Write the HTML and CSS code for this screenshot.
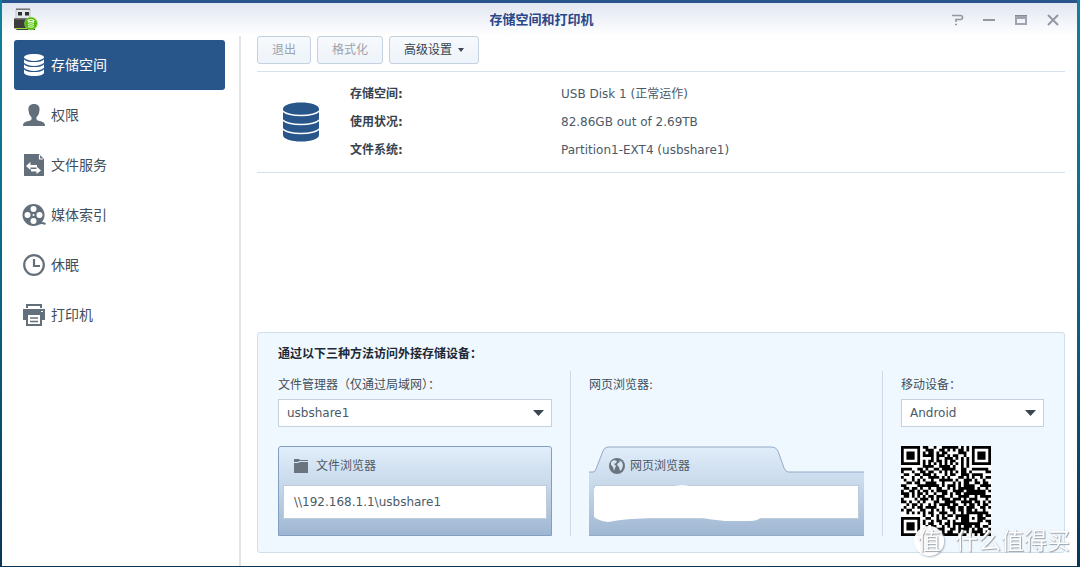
FILE: index.html
```html
<!DOCTYPE html>
<html lang="zh-CN">
<head>
<meta charset="utf-8">
<title>存储空间和打印机</title>
<link rel="stylesheet" href="styles.css">
</head>
<body>
<div class="window">
  <header class="titlebar">
    <svg class="app-icon" width="24" height="24" viewBox="0 0 24 24" aria-hidden="true">
      <path d="M2 1h14v10H2z" fill="#e4e7ea" stroke="#a5a9ae" stroke-width=".6"/>
      <path d="M2 .5h14v1.500H2z" fill="#777"/>
      <path d="M4 4h4v3.500H4zM11 4h4v3.500h-4z" fill="#2b2f33"/>
      <path d="M1 10h17l3 3v9H3l-3-2v-9z" fill="#3b3d3e"/>
      <path d="M1 10h17v1.500H1z" fill="#777"/>
      <path d="M1 20h12v1H1z" fill="#9adf32"/>
      <circle cx="17" cy="15.500" r="6.300" fill="#52b90b" stroke="#8edb4c" stroke-width=".8"/>
      <g fill="none" stroke="#e8ffd2" stroke-width="1.200"><ellipse cx="17" cy="12.500" rx="3" ry="1"/><path d="M14 14.500q3 1.500 6 0M14 16.500q3 1.500 6 0M14 18.500q3 1.500 6 0"/></g>
    </svg>
    <h1 class="title">存储空间和打印机</h1>
    <div class="controls">
      <button class="control" aria-label="帮助"><svg width="14" height="14" viewBox="0 0 14 14"><path d="M2 2.500h8.500q2 0 2 2t-2 2H6V9M5 11.500h2" fill="none" stroke="#9498a2" stroke-width="1.600"/></svg></button>
      <button class="control" aria-label="最小化"><svg width="14" height="14" viewBox="0 0 14 14"><path d="M1 7h12" stroke="#9498a2" stroke-width="2"/></svg></button>
      <button class="control" aria-label="最大化"><svg width="14" height="14" viewBox="0 0 14 14"><path d="M1 2h12v10H1zM3 6v4h8V6z" fill="#a0a4ae" fill-rule="evenodd"/><path d="M1 2h12v1H1z" fill="#858994"/></svg></button>
      <button class="control" aria-label="关闭"><svg width="14" height="14" viewBox="0 0 14 14"><path d="M2 2l10 10M12 2L2 12" stroke="#9498a2" stroke-width="2"/></svg></button>
    </div>
  </header>
  <div class="body">
    <nav class="sidebar">
      <a class="nav-item active" href="#storage"><svg width="24" height="24" viewBox="0 0 24 24" fill="currentColor"><path d="M2 4.500C2 2.500 6 1 12 1s10 1.500 10 3.500v15c0 2-4 3.500-10 3.500S2 21.500 2 19.500z"/><path d="M2 5.500q3 3 10 3t10-3M2 10.500q3 3 10 3t10-3M2 15.500q3 3 10 3t10-3" fill="none" stroke="#28568a" stroke-width="1.200"/></svg>存储空间</a>
      <a class="nav-item" href="#permission"><svg width="24" height="24" viewBox="0 0 24 24" fill="currentColor"><path d="M12 1c4 0 6 2.500 5.500 6l-.3 2c-.3 2-1.200 4-2.700 5v2c0 1.500 2 1.500 5 2.500 2.500.8 3.500 2 3.500 4.500H1c0-2.500 1-3.700 3.500-4.500 3-1 5-1 5-2.500v-2c-1.500-1-2.400-3-2.700-5l-.3-2C6 3.500 8 1 12 1z"/></svg>权限</a>
      <a class="nav-item" href="#service"><svg width="24" height="24" viewBox="0 0 24 24"><path d="M2 1h15l5 5v17H2z" fill="currentColor"/><path d="M17.500 2v4H21" fill="none" stroke="#fff" stroke-width="1.200"/><path d="M4 13l4.500-4v3H15v2.500H8.500V17zM19 17.500L14.500 21v-2.500H9V16h5.500v-2.500z" fill="#fff"/></svg>文件服务</a>
      <a class="nav-item" href="#media"><svg width="24" height="24" viewBox="0 0 24 24"><path d="M17 20.500q3-1 6.500.5" stroke="currentColor" stroke-width="2" fill="none"/><circle cx="11.500" cy="12" r="11" fill="currentColor"/><g fill="#fff"><circle cx="11.500" cy="6" r="3"/><circle cx="5.500" cy="12" r="3"/><circle cx="17.500" cy="12" r="3"/><circle cx="11.500" cy="18" r="3"/><circle cx="11.500" cy="12" r="1"/></g></svg>媒体索引</a>
      <a class="nav-item" href="#hibernation"><svg width="24" height="24" viewBox="0 0 24 24" fill="none" stroke="currentColor" stroke-width="2.200"><circle cx="12" cy="12" r="9.800"/><path d="M12 6v7h6"/></svg>休眠</a>
      <a class="nav-item" href="#printer"><svg width="24" height="24" viewBox="0 0 24 24"><path d="M5 5V2h14v3" fill="none" stroke="currentColor" stroke-width="2"/><path d="M1 6h22v11h-3v6H4v-6H1z" fill="currentColor"/><path d="M6 12h12v9H6z" fill="#fff"/><path d="M8 15h8M8 18.500h8" stroke="currentColor" stroke-width="1.500"/><path d="M19 8h2v1h-2z" fill="#fff"/></svg>打印机</a>
    </nav>
    <main class="main">
      <div class="toolbar">
        <button class="btn" disabled>退出</button>
        <button class="btn" disabled>格式化</button>
        <button class="btn">高级设置<svg width="6" height="4" viewBox="0 0 6 4"><path d="M0 0h6L3 4z" fill="#3a4651"/></svg></button>
      </div>
      <section class="device">
        <svg class="disk" width="38" height="40" viewBox="0 0 38 40"><path d="M1 7c0-4 8-6.500 18-6.500S37 3 37 7v26c0 4-8 6.500-18 6.500S1 37 1 33z" fill="#28568a"/><path d="M0 8.500q5 5 19 5t19-5M0 17.500q5 5 19 5t19-5M0 26.500q5 5 19 5t19-5" fill="none" stroke="#fff" stroke-width="1.500"/></svg>
        <dl class="facts">
          <dt>存储空间:</dt><dd>USB Disk 1 (正常运作)</dd>
          <dt>使用状况:</dt><dd>82.86GB out of 2.69TB</dd>
          <dt>文件系统:</dt><dd>Partition1-EXT4 (usbshare1)</dd>
        </dl>
      </section>
      <section class="access">
        <h2 class="access-title">通过以下三种方法访问外接存储设备：</h2>
        <div class="methods">
          <div class="method">
            <label class="label" for="share">文件管理器（仅通过局域网）：</label>
            <div class="pick"><select id="share"><option>usbshare1</option></select><svg width="11" height="6" viewBox="0 0 11 6"><path d="M0 0h11L5.500 6z" fill="#3a4651"/></svg></div>
            <div class="card file-card">
              <label class="card-title" for="path"><svg width="16" height="16" viewBox="0 0 16 16"><path d="M1 1h5l1 1h8v1H6L5 4H1z" fill="#69747e"/><path d="M1 5h4l2-1h8v11H1z" fill="#69747e"/></svg>文件浏览器</label>
              <input class="card-input" id="path" type="text" value="\\192.168.1.1\usbshare1" readonly>
            </div>
          </div>
          <div class="method">
            <label class="label" for="url">网页浏览器:</label>
            <div class="card web-card">
              <svg class="tab-shape" viewBox="0 0 275 90" preserveAspectRatio="none" aria-hidden="true">
                <defs><linearGradient id="tab" x1="0" y1="0" x2="0" y2="1"><stop offset="0" stop-color="#e0edfa"/><stop offset=".4" stop-color="#c9daeb"/><stop offset="1" stop-color="#9fb6d2"/></linearGradient></defs>
                <path d="M0 26h4q2 0 3-3l7-18q2-4 5-4h164q4 0 6 4l6 17q2 4 4 4h76v64H0z" fill="url(#tab)"/>
                <path d="M0 26h4q2 0 3-3l7-18q2-4 5-4h164q4 0 6 4l6 17q2 4 4 4h76M0 89.500h275" fill="none" stroke="#94aac8"/>
              </svg>
              <label class="card-title" for="url"><svg width="16" height="16" viewBox="0 0 16 16"><circle cx="8" cy="8" r="8" fill="#69747e"/><path d="M2 4l3-2 3 1-1 2-2 1 2 2-1 2-1 3-1-4-2-2zM10 2l3 2 1 3-1 4-2 2-1-4-2-2 1-2 2-1z" fill="#d6e4f2"/></svg>网页浏览器</label>
              <input class="card-input" id="url" type="text" readonly>
              <svg class="smudge" viewBox="0 0 275 36" preserveAspectRatio="none" aria-hidden="true"><path d="M5 4h75q13-6 26 0v26l66 1q-2 4-12 4H136q-12-1-29-4-30-1-42 1-30 1-46 4-9-1-14-5z" fill="#fff"/></svg>
            </div>
          </div>
          <div class="method">
            <label class="label" for="mobile">移动设备：</label>
            <div class="pick"><select id="mobile"><option>Android</option></select><svg width="11" height="6" viewBox="0 0 11 6"><path d="M0 0h11L5.500 6z" fill="#3a4651"/></svg></div>
            <svg class="qr" id="qr" viewBox="0 0 33 33" role="img" aria-label="二维码"><path fill="#fff" d="M0 0h33v33H0z"/></svg>
          </div>
        </div>
      </section>
    </main>
  </div>
</div>
<div class="watermark"><span class="watermark-badge">值</span>什么值得买</div>
<script src="qr.js"></script>
</body>
</html>
```
FILE: styles.css
```css
* { box-sizing: border-box; }
body {
  margin: 0;
  min-height: 100vh;
  display: flex;
  padding: 0 3px 1px 2px;
  background: linear-gradient(#11819b, #0b6684 50%, #0a3556);
  font: 12px/18px "DejaVu Sans", "Noto Sans CJK SC", sans-serif;
  color: #4b5a68;
}
button, input, select { font: inherit; color: inherit; }
.window {
  flex: 1;
  display: flex;
  flex-direction: column;
  border-top: 3px solid #28568c;
  background: #fff;
}
.titlebar {
  display: grid;
  grid-template-columns: 1fr auto 1fr;
  align-items: center;
  height: 33px;
  padding: 0 8px 0 12px;
  background: linear-gradient(#e1e7f1, #fff);
}
.title { margin: 0; font-size: 13px; line-height: 20px; color: #28478a; }
.controls { display: flex; justify-content: flex-end; }
.control {
  width: 32px;
  height: 32px;
  padding: 0;
  border: 0;
  background: none;
  display: flex;
  align-items: center;
  justify-content: center;
}
.body { flex: 1; display: flex; }
.sidebar {
  width: 239px;
  flex: none;
  display: flex;
  flex-direction: column;
  padding: 4px 14px 0 12px;
  border-right: 2px solid #e4e4e4;
}
.nav-item {
  display: flex;
  align-items: center;
  gap: 5px;
  height: 50px;
  padding: 0 8px 1px;
  border-radius: 3px;
  font-size: 14px;
  color: #414f5c;
  text-decoration: none;
}
.nav-item svg { color: #646f7c; }
.nav-item.active, .nav-item.active svg { color: #fff; }
.nav-item.active { background: #28568a; }
.main {
  flex: 1;
  min-width: 0;
  display: flex;
  flex-direction: column;
  padding: 0 12px 13px 16px;
}
.toolbar { display: flex; gap: 6px; padding-bottom: 7px; border-bottom: 1px solid #d5e1ec; }
.btn {
  display: flex;
  align-items: center;
  gap: 6px;
  height: 28px;
  padding: 0 14px;
  border: 1px solid #c4d1de;
  border-radius: 3px;
  background: linear-gradient(#f7fafd, #edf3f9);
  color: #36424e;
}
.btn:disabled { color: #9aa3ad; }
.device {
  display: flex;
  align-items: center;
  gap: 30px;
  padding: 8px 25px;
  border-bottom: 1px solid #d2e0ec;
}
.facts { flex: 1; margin: 0; display: grid; grid-template-columns: 211px 1fr; line-height: 28px; }
.facts dt { font-weight: bold; color: #38424d; }
.facts dd { margin: 0; }
.access {
  margin-top: auto;
  padding: 11px 20px 16px;
  border: 1px solid #cfdfec;
  border-radius: 3px;
  background: #f0f8ff;
}
.access-title { margin: 0 0 7px; font-size: 12px; line-height: 20px; color: #202836; }
.methods { display: grid; grid-template-columns: 292px 312px 1fr; }
.method {
  display: flex;
  flex-direction: column;
  padding: 5px 18px 0 0;
}
.method + .method { padding: 5px 18px 0 18px; border-left: 1px solid #ccdae8; }
.method + .method + .method { padding-right: 0; }
.label { margin-bottom: 5px; color: #414e5b; }
.pick { position: relative; margin-bottom: 19px; }
.pick select {
  appearance: none;
  display: block;
  width: 100%;
  height: 28px;
  padding: 0 8px;
  border: 1px solid #c4d2e0;
  border-radius: 0;
  background: #fff;
}
.pick svg { position: absolute; right: 8px; top: 11px; pointer-events: none; }
.card { position: relative; height: 90px; padding: 11px 5px 0; margin-top: auto; }
.file-card {
  padding: 10px 4px 0;
  border: 1px solid #829fc3;
  border-radius: 3px 3px 0 0;
  background: linear-gradient(#e2eefb, #c9daeb 40%, #9fb6d2);
}
.card-title { position: relative; display: flex; align-items: center; gap: 7px; height: 18px; padding-left: 10px; }
.web-card .card-title { padding-left: 15px; gap: 5px; }
.card-input {
  position: relative;
  display: block;
  width: 100%;
  height: 34px;
  margin-top: 10px;
  padding: 0 10px;
  border: 1px solid #bdcbdc;
  background: #fff;
}
.tab-shape { position: absolute; left: 0; top: 0; width: 100%; height: 100%; }
.smudge { position: absolute; left: 0; top: 38px; width: 100%; height: 38px; }
.qr { width: 90px; height: 90px; display: block; }
.watermark {
  position: fixed;
  right: 10px;
  bottom: 11px;
  display: flex;
  align-items: center;
  gap: 11px;
  font-size: 23px;
  line-height: 30px;
  color: #fff;
  text-shadow: 1px 1px 1px #9ba3aa, 0 0 1px #b4bbc1;
}
.watermark-badge {
  width: 30px;
  height: 30px;
  border-radius: 50%;
  background: #fffffff0;
  box-shadow: 1px 1px 2px #aab2b9;
  text-align: center;
}
```
FILE: qr.js
```js
// One string per row of modules; "#" is dark.
const rows = [
  "#######.##..#..######.#.#.#######",
  "#.....#..###..##.#.#.##.#.#.....#",
  "#.###.#.#.##.#.##....###..#.###.#",
  "#.###.#.####.###.#.##..#..#.###.#",
  "#.###.#....#.#..###.#.#.#.#.###.#",
  "#.....#.#.##.##.#.##..#.#.#.....#",
  "#######.#.#.#.#.#.#.#.#.#.#######",
  "........####..####.#..#.#........",
  "####..##.#..##.#####..##..######.",
  "#...#..##.##..#.#.#.#.##.#.....##",
  ".##..##.###.#...#.##..###.####...",
  "#...#..#..####.#.#...##.#.#..#.##",
  ".#..#.#.#..#..#####.#..###.#..#..",
  "..##.##..####..#...#.#.##..##.##.",
  "##....########.#.###.#.####..####",
  ".##.##.#..#..##..#.#.######.#..#.",
  "#..##.#.##.#.####..####.#######.#",
  "###.#.##.#..#..##.#.##.########..",
  ".##.#.#.#.##.###..#..####..#.####",
  "#....#.###.#.#.###.###.#.###...#.",
  "##.#..#.#...##..####..####.##.#.#",
  "..#.##.#..#.#.####.##..#.##.#.##.",
  ".#..#.##.####..#.###.##.###..##.#",
  "#.##...##..#.#.#..##.##.##.#..#..",
  "..#.#.#.#.##..###..#..#.########.",
  "........#..#.#.#.##.#####...##.##",
  "#######..##..#.##...#.###.#.###..",
  "#.....#.#..#.##..#.#..###...##.##",
  "#.###.#.#.##..#.##.##########...#",
  "#.###.#..#.##..#.#.#.#.###.##.##.",
  "#.###.#.##.#.###..##.####.#.##..#",
  "#.....#.#.####.#.##..#..#.####.#.",
  "#######..##.#.#######.##.#.#.####"
];

let d = "";
rows.forEach((row, y) => {
  for (const run of row.matchAll(/#+/g)) d += `M${run.index} ${y}h${run[0].length}v1h-${run[0].length}z`;
});
const path = document.createElementNS("http://www.w3.org/2000/svg", "path");
path.setAttribute("d", d);
document.getElementById("qr").append(path);
```
